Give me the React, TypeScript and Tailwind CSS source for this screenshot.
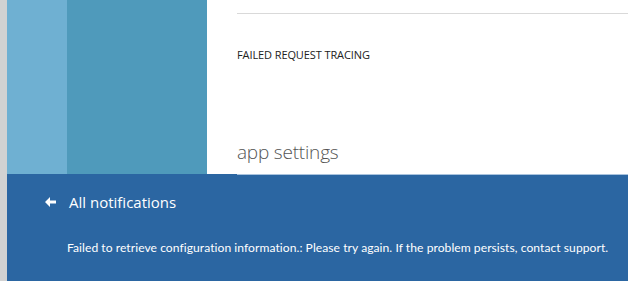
import React from "react";

const font = { fontFamily: '"Open Sans", "Noto Sans", sans-serif' };

function BackArrow() {
  return (
    <svg width="11" height="10" viewBox="0 0 11 10" className="shrink-0">
      <path d="M0 5 L5 0 L5 3.5 L11 3.5 L11 6.5 L5 6.5 L5 10 Z" fill="#ffffff" />
    </svg>
  );
}

export default function App() {
  return (
    <div className="w-[628px] h-[281px] flex overflow-hidden bg-white" style={font}>
      {/* window edge */}
      <div className="w-[7px] shrink-0 bg-[#d2d2d2]" />

      <div className="flex-1 flex flex-col">
        {/* blades */}
        <div className="h-[174px] flex">
          <div className="w-[60px] bg-[#6fb0d2]" />
          <div className="w-[140px] bg-[#4f9abb]" />
          <div className="flex-1 pl-[30px] flex flex-col">
            <div className="mt-[13px] h-[1px] bg-[#d9d9d9]" />
            <div className="mt-[34px] text-[11px] leading-[14px] text-[#222] tracking-[-0.1px]">
              FAILED REQUEST TRACING
            </div>
            <div className="mt-[78px] text-[19px] leading-[24px] font-light text-[#555] tracking-[-0.2px]">
              app settings
            </div>
          </div>
        </div>

        {/* notification bar */}
        <div className="flex-1 bg-[#2b66a2] relative">
          <div className="absolute left-[230px] right-0 top-0 h-[1px] bg-[#a9c3de]" />
          <div className="flex items-center pl-[38px] pt-[18px]">
            <BackArrow />
            <span className="ml-[13px] text-[15px] leading-[20px] text-white">All notifications</span>
          </div>
          <div
            className="pl-[60px] pt-[28px] text-[12.1px] leading-[16px] text-white whitespace-nowrap tracking-[0.05px]"
            style={{ fontFamily: 'Lato, "Open Sans", sans-serif' }}
          >
            Failed to retrieve configuration information.: Please try again. If the problem persists, contact support.
          </div>
        </div>
      </div>
    </div>
  );
}
